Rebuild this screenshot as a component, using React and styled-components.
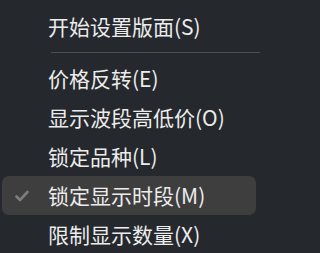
import React from "react";
import styled, { createGlobalStyle } from "styled-components";

const Global = createGlobalStyle`
  html, body { margin: 0; padding: 0; background: #25282d; }
  body { font-family: "Noto Sans CJK SC", "Noto Sans", sans-serif; }
`;

const Menu = styled.div`
  width: 260px;
  height: 253px;
  box-sizing: border-box;
  background: #25282d;
  padding-top: 7px;
  display: flex;
  flex-direction: column;
  overflow: hidden;
`;

const Item = styled.div`
  height: 39px;
  margin: 0 4px 0 2px;
  border-radius: 7px;
  display: flex;
  align-items: center;
  flex-shrink: 0;
  background: ${(p) => (p.$active ? "#3e3e3f" : "transparent")};
`;

const CheckSlot = styled.div`
  width: 46px;
  display: flex;
  align-items: center;
  justify-content: flex-start;
  padding-left: 12px;
  box-sizing: border-box;
`;

const Label = styled.span`
  color: #ececec;
  font-size: 21px;
  line-height: 39px;
  white-space: nowrap;
`;

const Separator = styled.div`
  height: 1px;
  margin: 6px 0 6px 51px;
  background: #4e4f52;
  flex-shrink: 0;
`;

const Check = () => (
  <svg width="16" height="12" viewBox="0 0 16 12">
    <polyline
      points="2.5,6.5 6,10 13.5,2"
      fill="none"
      stroke="#7d7d7e"
      strokeWidth="2.6"
      strokeLinecap="round"
      strokeLinejoin="round"
    />
  </svg>
);

const items = [
  { label: "价格反转(E)" },
  { label: "显示波段高低价(O)" },
  { label: "锁定品种(L)" },
  { label: "锁定显示时段(M)", checked: true },
  { label: "限制显示数量(X)" },
];

export default function App() {
  return (
    <>
      <Global />
      <Menu>
        <Item>
          <CheckSlot />
          <Label>开始设置版面(S)</Label>
        </Item>
        <Separator />
        {items.map((it) => (
          <Item key={it.label} $active={it.checked}>
            <CheckSlot>{it.checked && <Check />}</CheckSlot>
            <Label>{it.label}</Label>
          </Item>
        ))}
      </Menu>
    </>
  );
}
